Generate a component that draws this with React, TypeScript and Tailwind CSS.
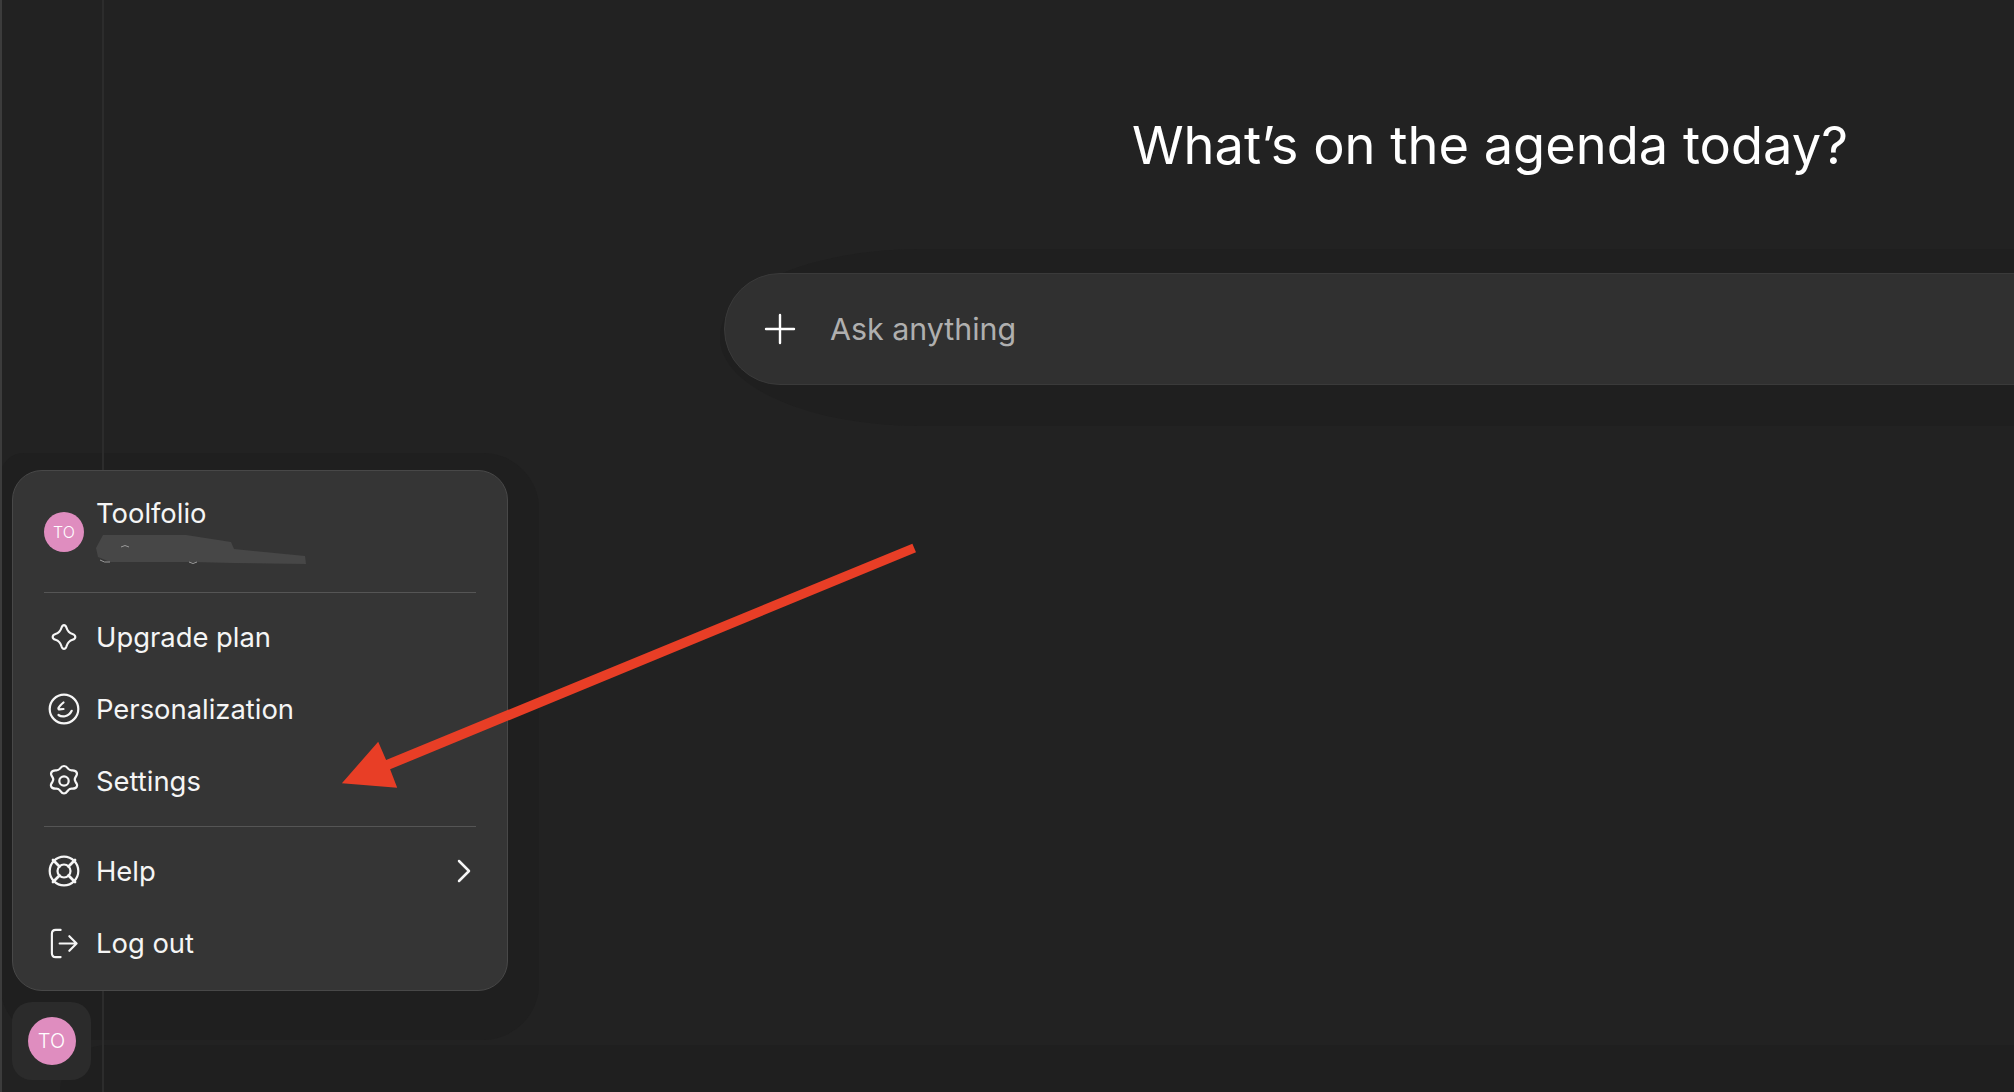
import { ChevronRight, Plus } from 'lucide-react'
import type { ReactNode } from 'react'

const font = "font-['Inter','Liberation_Sans',sans-serif]"

function SparkleIcon() {
  return (
    <svg width="34" height="34" viewBox="0 0 30 30" fill="none" stroke="currentColor" strokeWidth="1.900" strokeLinejoin="round">
      <path d="M15 4.500c1.200 0 1.700 1 2.200 2.300.9 2.900 2.300 4.600 5.300 5.600 1.400.5 2.500 1.200 2.500 2.600s-1.100 2-2.500 2.500c-3 1-4.400 2.700-5.300 5.700-.5 1.300-1 2.300-2.200 2.300s-1.700-1-2.200-2.300c-.9-3-2.300-4.700-5.300-5.700-1.400-.5-2.500-1.100-2.500-2.500s1.100-2.100 2.500-2.600c3-1 4.400-2.700 5.300-5.600.5-1.300 1-2.300 2.200-2.300z" />
    </svg>
  )
}

function FaceIcon() {
  return (
    <svg width="32" height="32" viewBox="0 0 32 32" fill="none" stroke="currentColor" strokeWidth="2.200" strokeLinecap="round" strokeLinejoin="round">
      <circle cx="16" cy="16" r="14.300" />
      <path d="M15.500 9.500c-2 1.700-4.300 3.800-5 5.500-.4 1 .3 1.500 1.200 1.300l3.800-.3" />
      <path d="M10.500 22c3 2.200 10 2.500 13.200-4.200" />
    </svg>
  )
}

function GearIcon() {
  return (
    <svg width="32" height="34" viewBox="0 0 32 34" fill="none" stroke="currentColor" strokeWidth="2.200" strokeLinejoin="round">
      <path d="M16 2c2.200 0 3.300 1.500 4.300 2.900 1 1.200 2.200 1.500 3.700 1.400 2-.1 3.800.3 4.700 2.200.8 1.800-.1 3.300-1.200 4.700-1 1.500-1 3 0 4.500 1.100 1.400 2.200 3.100 1.300 4.900-1 1.800-2.800 2.100-4.800 2-1.500-.1-2.700.3-3.700 1.500-1 1.300-2.100 3.400-4.300 3.400s-3.300-2-4.300-3.400c-1-1.200-2.200-1.600-3.700-1.500-2 .1-3.800-.2-4.800-2-.9-1.800.2-3.500 1.300-4.900 1-1.500 1-3 0-4.500C3.400 11.800 2.500 10.300 3.300 8.500c.9-1.900 2.700-2.300 4.700-2.200 1.500.1 2.700-.2 3.700-1.400C12.700 3.500 13.800 2 16 2z" />
      <circle cx="16" cy="17" r="4.700" />
    </svg>
  )
}

function HelpIcon() {
  return (
    <svg width="32" height="32" viewBox="0 0 32 32" fill="none" stroke="currentColor" strokeWidth="2.200" strokeLinecap="round">
      <circle cx="16" cy="16" r="14.300" />
      <circle cx="16" cy="16" r="6.500" />
      <path d="M5 5l6.500 6.500M27 5l-6.500 6.500M5 27l6.500-6.500M27 27l-6.500-6.500" strokeWidth="2.800" />
    </svg>
  )
}

function LogoutIcon() {
  return (
    <svg width="30" height="31" viewBox="0 0 30 32" fill="none" stroke="currentColor" strokeWidth="2.200" strokeLinecap="round" strokeLinejoin="round">
      <path d="M11.500 2H6.500C4 2 2.500 3.500 2.500 6v20c0 2.500 1.500 4 4 4h5" />
      <path d="M10.500 16H28M20.500 8.500L28 16l-7.500 7.500" />
    </svg>
  )
}

function MenuRow({ icon, label, trailing }: { icon: ReactNode; label: string; trailing?: ReactNode }) {
  return (
    <div className="flex h-[72px] items-center">
      <div className="flex w-[40px] justify-center text-[#f6f6f6]">{icon}</div>
      <span className="ml-[12px] flex-1 pt-[2px] text-[27.400px] leading-none text-[#f5f5f5]">{label}</span>
      {trailing}
    </div>
  )
}

export default function App() {
  return (
    <div className={`relative flex h-[1092px] w-[2014px] overflow-hidden bg-[#222222] ${font}`}>
      {/* dark backdrops behind the menu and along the bottom */}
      <div className="absolute right-0 bottom-0 left-[60px] h-[47px] rounded-tl-[60px] bg-[#1f1f1f]" />
      <div className="absolute top-[453px] left-0 h-[587px] w-[539px] rounded-[56px] rounded-tl-[24px] bg-[#1f1f1f]" />

      {/* left rail */}
      <aside className="relative z-10 flex h-full w-[104px] shrink-0 flex-col justify-end border-r-2 border-l-2 border-r-[#2c2c2c] border-l-[#3c3c3c] pb-[12px] pl-[10px]">
        <div className="flex h-[78px] w-[79px] items-center justify-center rounded-[20px] bg-[#2b2b2b]">
          <div className="flex h-[48px] w-[48px] items-center justify-center rounded-full bg-[#df8dbf] text-[20px] font-light text-white">TO</div>
        </div>
      </aside>

      {/* main */}
      <main className="flex w-[2772px] shrink-0 flex-col items-center pt-[111px]">
        <h1 className="text-[52.400px] leading-[68px] font-normal text-white">What’s on the agenda today?</h1>
        <div className="relative mt-[94px] w-[1532px]">
          <div className="absolute -top-[24px] right-0 -bottom-[41px] -left-[4px] rounded-[200px/88px] bg-[#1f1f1f]" />
          <div className="relative flex h-[112px] items-center rounded-[56px] border border-[#3a3a3a] bg-[#303030] pl-[31px]">
            <Plus size={48} strokeWidth={1.200} className="text-white" />
            <span className="ml-[26px] text-[30.400px] leading-none text-[#afafaf]">Ask anything</span>
          </div>
        </div>
      </main>

      {/* account menu */}
      <div className="absolute top-[470px] left-[12px] z-20 w-[496px] rounded-[30px] border border-[#484848] bg-[#353535] px-[31px]">
        <div className="flex h-[122px] items-center border-b border-[#555555]">
          <div className="flex h-[40px] w-[40px] items-center justify-center rounded-full bg-[#df8dbf] text-[16px] font-light text-white">TO</div>
          <div className="ml-[12px] h-[72px]">
            <p className="text-[27.400px] leading-[34px] text-[#f5f5f5]">Toolfolio</p>
          </div>
        </div>
        <div className="pt-[8px] pb-[9px]">
          <MenuRow icon={<SparkleIcon />} label="Upgrade plan" />
          <MenuRow icon={<FaceIcon />} label="Personalization" />
          <MenuRow icon={<GearIcon />} label="Settings" />
        </div>
        <div className="border-t border-[#555555] pt-[8px] pb-[11px]">
          <MenuRow
            icon={<HelpIcon />}
            label="Help"
            trailing={<ChevronRight size={40} strokeWidth={1.500} className="-mr-[8px] text-[#f6f6f6]" />}
          />
          <MenuRow icon={<LogoutIcon />} label="Log out" />
        </div>
      </div>

      {/* scribbled-out email and red annotation arrow */}
      <svg className="pointer-events-none absolute inset-0 z-30" width="2014" height="1092" viewBox="0 0 2014 1092">
        <path d="M103 535L186 535L231 542L234 549L305 556L306 564L234 563L193 562L110 562L98 557L96 548Z" fill="#474747" />
        <path d="M121 547q4-3 8 0M189 562q4 3 8 0M100 560q4 3 10 2" fill="none" stroke="#9a9a9a" strokeWidth="1" />
        <polygon points="912.400,543.700 916,552.300 390.100,769.300 397.200,787.700 341.900,783.300 378.200,741.700 386.100,760" fill="#e83e26" />
      </svg>
    </div>
  )
}
